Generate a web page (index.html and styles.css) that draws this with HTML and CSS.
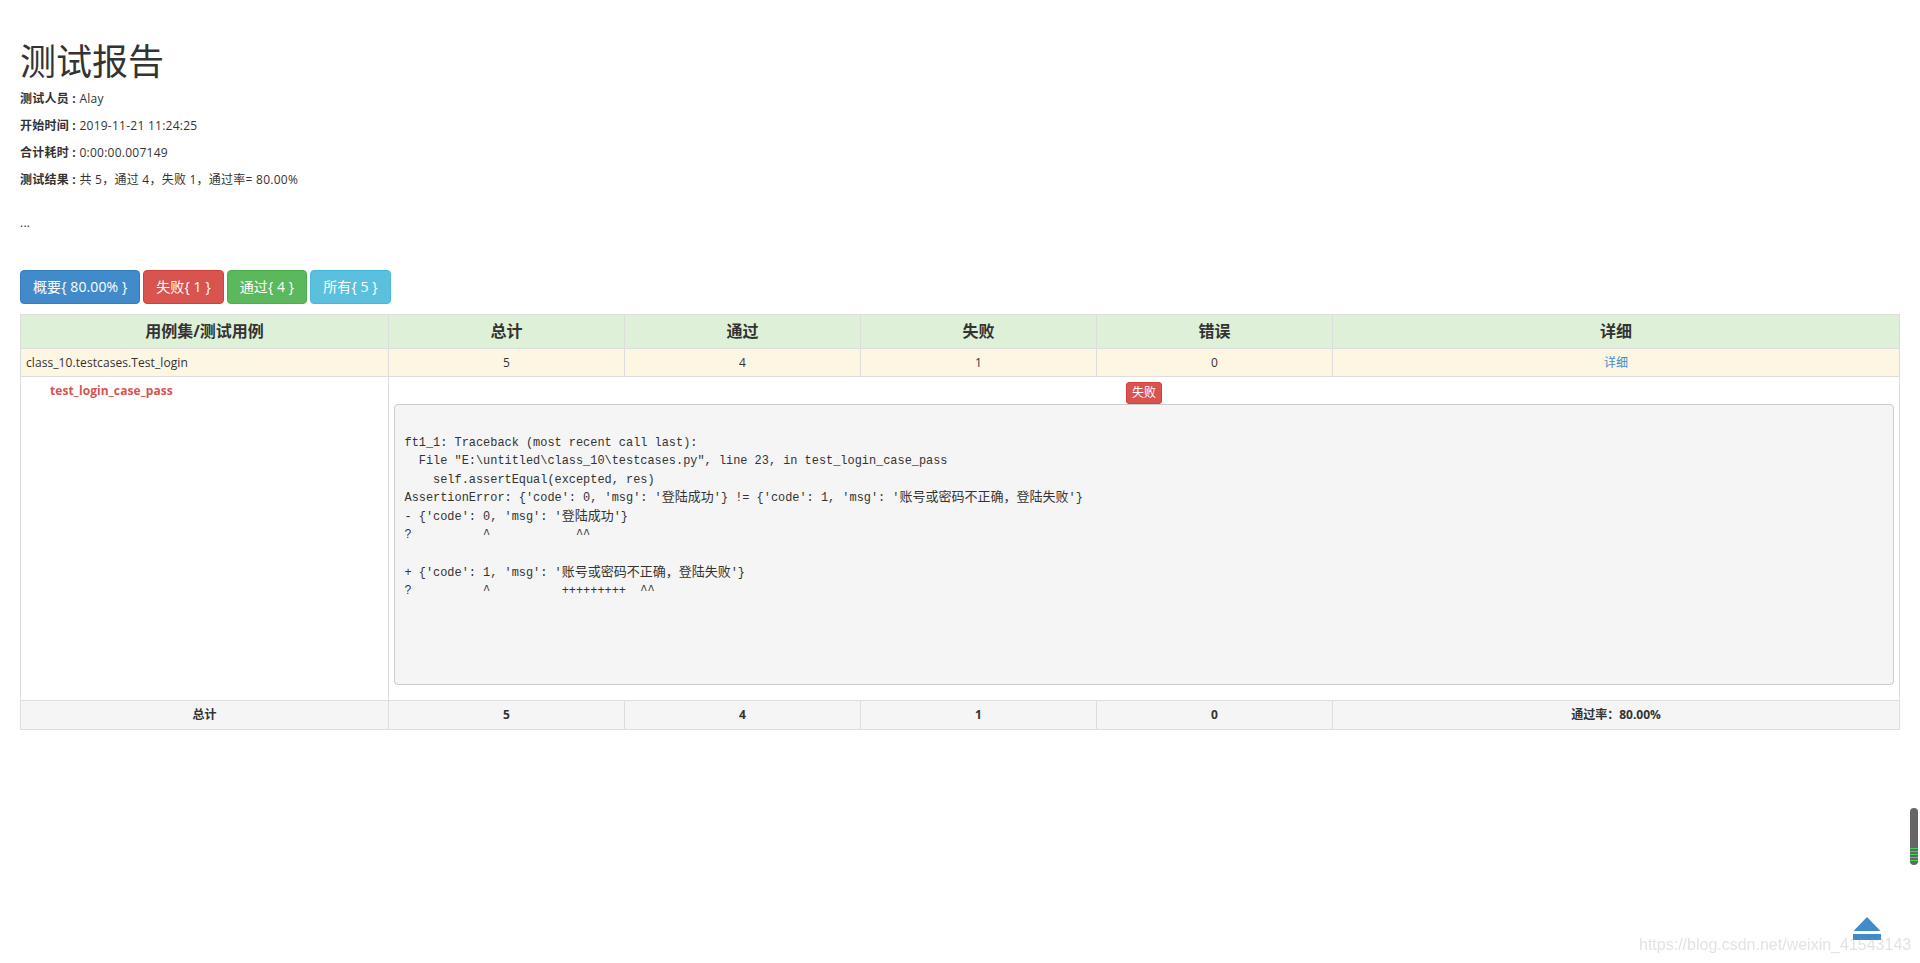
FILE: index.html
```html
<!DOCTYPE html>
<html lang="zh-CN">
<head>
<meta charset="utf-8">
<title>测试报告</title>
<link rel="stylesheet" href="styles.css">
</head>
<body>
<main class="container">
  <header class="report-head">
    <h1>测试报告</h1>
    <p><strong>测试人员 : </strong>Alay</p>
    <p><strong>开始时间 : </strong>2019-11-21 11:24:25</p>
    <p><strong>合计耗时 : </strong>0:00:00.007149</p>
    <p><strong>测试结果 : </strong>共 5，通过 4，失败 1，通过率= 80.00%</p>
    <p class="desc">...</p>
  </header>
  <nav class="filters">
    <a class="btn btn-primary">概要{ 80.00% }</a>
    <a class="btn btn-danger">失败{ 1 }</a>
    <a class="btn btn-success">通过{ 4 }</a>
    <a class="btn btn-info">所有{ 5 }</a>
  </nav>
  <table class="result">
    <colgroup>
      <col class="c-name"><col class="c-num"><col class="c-num"><col class="c-num"><col class="c-num"><col>
    </colgroup>
    <thead>
      <tr class="head-row"><th>用例集/测试用例</th><th>总计</th><th>通过</th><th>失败</th><th>错误</th><th>详细</th></tr>
    </thead>
    <tbody>
      <tr class="suite-row">
        <td class="left">class_10.testcases.Test_login</td><td>5</td><td>4</td><td>1</td><td>0</td><td><a class="link">详细</a></td>
      </tr>
      <tr class="case-row">
        <td class="case-name">test_login_case_pass</td>
        <td colspan="5">
          <a class="btn btn-danger btn-xs">失败</a>
          <pre>

ft1_1: Traceback (most recent call last):
  File "E:\untitled\class_10\testcases.py", line 23, in test_login_case_pass
    self.assertEqual(excepted, res)
AssertionError: {'code': 0, 'msg': '<span class="cn">登陆成功</span>'} != {'code': 1, 'msg': '<span class="cn">账号或密码不正确，登陆失败</span>'}
- {'code': 0, 'msg': '<span class="cn">登陆成功</span>'}
?          ^            ^^

+ {'code': 1, 'msg': '<span class="cn">账号或密码不正确，登陆失败</span>'}
?          ^          +++++++++  ^^




</pre>
        </td>
      </tr>
      <tr class="total-row"><td>总计</td><td>5</td><td>4</td><td>1</td><td>0</td><td>通过率：80.00%</td></tr>
    </tbody>
  </table>
</main>
<div class="scroll-widget"><div class="scroll-fill"></div></div>
<a class="back-top" aria-label="top">
  <svg width="28" height="23" viewBox="0 0 28 23"><path d="M14 0 L27.500 14 L0.500 14 Z" fill="#428bca"/><rect x="0" y="17" width="28" height="6" fill="#428bca"/></svg>
</a>
<div class="watermark">https://blog.csdn.net/weixin_41543143</div>
</body>
</html>
```
FILE: styles.css
```css
* { box-sizing: border-box; }
html, body { margin: 0; height: 100%; }
body {
  background: #fff;
  color: #333;
  font-family: "Open Sans", "Noto Sans CJK SC", sans-serif;
  font-size: 12px;
  line-height: 1.42857;
  overflow: hidden;
}
.container { padding: 20px 20px 0; }
h1 {
  margin: 22px 0 8px;
  font-size: 36px;
  font-weight: 400;
  line-height: 1.1;
}
.report-head { margin-top: -20px; padding-top: 20px; }
.report-head p { margin: 0 0 10px; letter-spacing: .25px; }
.report-head p.desc { margin: 26px 0 39px; }
.filters { margin-bottom: 10px; height: 34px; display: flex; gap: 3px; }
.btn {
  display: inline-block;
  padding: 6px 12px;
  border: 1px solid transparent;
  border-radius: 4px;
  color: #fff;
  font-size: 14px;
  line-height: 20px;
  letter-spacing: .1px;
}
.btn-primary { background: #428bca; border-color: #357ebd; }
.btn-danger { background: #d9534f; border-color: #d43f3a; }
.btn-success { background: #5cb85c; border-color: #4cae4c; }
.btn-info { background: #5bc0de; border-color: #46b8da; }
.btn-xs { padding: 1px 5px; font-size: 12px; line-height: 18px; border-radius: 3px; letter-spacing: 0; }
.result {
  width: 100%;
  table-layout: fixed;
  border-collapse: collapse;
  border: 1px solid #ddd;
}
.c-name { width: 368px; }
.c-num { width: 236px; }
.result th, .result td {
  padding: 5px;
  border: 1px solid #ddd;
  text-align: center;
  vertical-align: top;
}
.result th { font-size: 16px; font-weight: 700; line-height: 23px; }
.head-row { background: #dff0d8; }
.suite-row { background: #fdf6e3; }
.result td.left { text-align: left; letter-spacing: .08px; }
.link { color: #428bca; }
.result td.case-name {
  padding-left: 29px;
  color: #d9534f;
  font-weight: 700;
  text-align: left;
  letter-spacing: .1px;
}
pre {
  display: block;
  margin: 0 0 10px;
  padding: 9.500px;
  background: #f5f5f5;
  border: 1px solid #ccc;
  border-radius: 4px;
  color: #333;
  font-family: "Liberation Mono", "Noto Sans CJK SC", monospace;
  font-size: 11.920px;
  line-height: 18.571px;
  text-align: left;
  height: 281px;
  overflow: hidden;
}
.cn { font-family: "Noto Sans CJK SC", sans-serif; font-size: 13px; line-height: 0; }
.total-row { background: #f5f5f5; font-weight: 700; }
.scroll-widget {
  position: fixed;
  left: 1910px;
  top: 808px;
  width: 8px;
  height: 57px;
  border-radius: 4px;
  background: #666;
  overflow: hidden;
}
.scroll-fill {
  position: absolute;
  left: 0;
  right: 0;
  bottom: 2px;
  height: 15px;
  background: repeating-linear-gradient(to bottom, #3d4 0, #3d4 1px, #666 1px, #666 3px);
}
.back-top { position: fixed; left: 1853px; top: 917px; line-height: 0; }
.watermark {
  position: fixed;
  left: 1639px;
  top: 934px;
  color: rgba(150, 150, 150, .28);
  font-family: "Liberation Sans", sans-serif;
  font-size: 16px;
  line-height: 22px;
}
```
